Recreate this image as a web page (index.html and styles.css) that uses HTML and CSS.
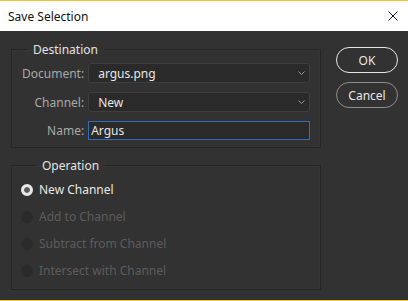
FILE: index.html
```html
<!DOCTYPE html>
<html lang="en">
<head>
  <meta charset="UTF-8" />
  <title>Save Selection</title>
  <link rel="stylesheet" href="styles.css">
</head>
<body>
  <div class="window">
    <div class="titlebar">
      <span class="title">Save Selection</span>
      <svg class="close" width="10" height="10" viewBox="0 0 10 10">
        <path d="M0.5 0.5 L9.5 9.5 M9.5 0.5 L0.5 9.5" stroke="#111" stroke-width="1" fill="none"/>
      </svg>
    </div>

    <div class="content">
      <div class="groups">
        <fieldset class="group dest">
          <legend>Destination</legend>
          <div class="form">
            <label>Document:</label>
            <div class="select">
              <span>argus.png</span>
              <svg width="7" height="4" viewBox="0 0 7 4"><path d="M0.5 0.5 L3.5 3.5 L6.5 0.5" stroke="#9a9a9a" fill="none"/></svg>
            </div>
            <label>Channel:</label>
            <div class="select">
              <span>New</span>
              <svg width="7" height="4" viewBox="0 0 7 4"><path d="M0.5 0.5 L3.5 3.5 L6.5 0.5" stroke="#9a9a9a" fill="none"/></svg>
            </div>
            <label>Name:</label>
            <div class="input">Argus</div>
          </div>
        </fieldset>

        <fieldset class="group op">
          <legend>Operation</legend>
          <div class="radio on"><span class="dot"></span>New Channel</div>
          <div class="radio off"><span class="dot"></span>Add to Channel</div>
          <div class="radio off"><span class="dot"></span>Subtract from Channel</div>
          <div class="radio off"><span class="dot"></span>Intersect with Channel</div>
        </fieldset>
      </div>

      <div class="buttons">
        <button class="btn ok">OK</button>
        <button class="btn">Cancel</button>
      </div>
    </div>
  </div>
</body>
</html>
```

FILE: styles.css
```css
* {
  margin: 0;
  padding: 0;
  box-sizing: border-box;
}
body {
  width: 408px;
  height: 301px;
  overflow: hidden;
  font-family: 'Noto Sans', 'Open Sans', sans-serif;
  font-size: 12px;
  background: #323232;
}
.window {
  height: 301px;
  display: flex;
  flex-direction: column;
  border-top: 1px solid #f0c232;
  border-bottom: 1px solid #f0c232;
}
.titlebar {
  height: 30px;
  background: #ffffff;
  display: flex;
  align-items: center;
  justify-content: space-between;
  padding: 0 10px 0 8px;
  color: #111;
}
.title {
  font-size: 12px;
}
.content {
  flex: 1;
  background: #323232;
  display: flex;
  padding: 10px 0 0 11px;
  gap: 15px;
}
.groups {
  width: 310px;
  display: flex;
  flex-direction: column;
  gap: 9px;
}
.group {
  border: 1px solid #262626;
  box-shadow: inset 0 0 0 1px #353535;
}
.group legend {
  margin-left: 15px;
  padding: 0 6px;
  color: #e2e2e2;
  font-size: 12px;
  line-height: 17px;
}
.form {
  display: grid;
  grid-template-columns: auto 1fr;
  align-items: center;
  column-gap: 4px;
  row-gap: 9px;
  padding: 5px 10px 7px 10px;
}
.form label {
  text-align: right;
  color: #a8a8a8;
}
.select {
  height: 20px;
  background: #2a2a2a;
  border: 1px solid #3e3e3e;
  border-radius: 3px;
  display: flex;
  align-items: center;
  justify-content: space-between;
  padding: 0 4px 0 9px;
  color: #e6e6e6;
}
.input {
  height: 19px;
  background: #2a2a2a;
  border: 1px solid #2f6fb7;
  padding-left: 2px;
  line-height: 17px;
  color: #e6e6e6;
}
.op {
  padding: 2px 0 5px 9px;
}
.radio {
  height: 27px;
  display: flex;
  align-items: center;
  gap: 6px;
}
.radio .dot {
  width: 12px;
  height: 12px;
  border-radius: 50%;
}
.radio.on {
  color: #e6e6e6;
}
.radio.on .dot {
  background: #e8e8e8;
  border: 3px solid #e8e8e8;
  box-shadow: inset 0 0 0 3px #5a5a5a;
}
.radio.off {
  color: #5c5c5c;
}
.radio.off .dot {
  background: #2b2b2b;
}
.buttons {
  display: flex;
  flex-direction: column;
  gap: 9px;
  padding-top: 6px;
}
.btn {
  width: 62px;
  height: 26px;
  border-radius: 13px;
  background: transparent;
  border: 1px solid #8c8c8c;
  color: #e6e6e6;
  font-family: inherit;
  font-size: 12px;
}
.btn.ok {
  border: 1.5px solid #e6e6e6;
}
```
